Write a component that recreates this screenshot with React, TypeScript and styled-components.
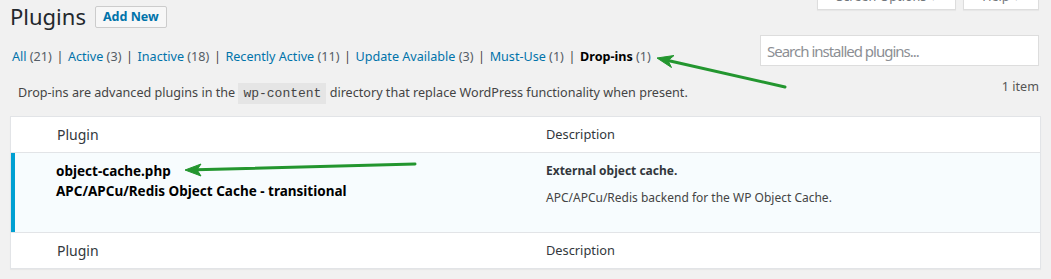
import React from 'react';
import styled, { createGlobalStyle } from 'styled-components';

const GlobalStyle = createGlobalStyle`
  body {
    margin: 0;
    background: #f1f1f1;
    font-family: "Noto Sans", sans-serif;
    font-size: 12.6px;
    color: #444;
  }
`;

const Page = styled.div`
  position: relative;
  width: 1051px;
  height: 279px;
  overflow: hidden;
  padding: 0 10px;
  box-sizing: border-box;
`;

const Header = styled.div`
  display: flex;
  align-items: flex-start;
  height: 35px;
`;

const Title = styled.h1`
  margin: 0;
  padding-top: 2px;
  font-size: 22px;
  font-weight: 400;
  line-height: 29px;
  color: #23282d;
`;

const AddButton = styled.a`
  margin: 6px 0 0 9px;
  height: 22px;
  box-sizing: border-box;
  padding: 0 7px;
  border: 1px solid #ccc;
  border-radius: 2px;
  background: #f7f7f7;
  color: #0073aa;
  font-weight: 700;
  font-size: 12.5px;
  line-height: 20px;
`;

const Meta = styled.div`
  margin: -18px 2px 0 auto;
  display: flex;
  gap: 7px;
`;

const MetaTab = styled.div<{ $w: number }>`
  width: ${p => p.$w}px;
  height: 28px;
  box-sizing: border-box;
  padding-top: 5px;
  background: #fff;
  border: 1px solid #ddd;
  border-top: none;
  box-shadow: 0 1px 1px rgba(0, 0, 0, 0.04);
  text-align: center;
  line-height: 20px;
  color: #72777c;
`;

const Toolbar = styled.div`
  display: flex;
  justify-content: space-between;
  align-items: flex-start;
  height: 31px;
`;

const Filters = styled.ul`
  list-style: none;
  margin: 12px 0 0 2px;
  padding: 0;
  display: flex;
  line-height: 20px;
  color: #666;
`;

const Filter = styled.li`
  white-space: pre;
`;

const FilterLink = styled.span<{ $current?: boolean }>`
  color: ${p => (p.$current ? '#000' : '#0073aa')};
  font-weight: ${p => (p.$current ? 700 : 400)};
`;

const Count = styled.span`
  color: #555d66;
`;

const Sep = styled.span`
  margin: 0 4.6px;
  color: #444;
`;

const Search = styled.input`
  width: 279px;
  height: 31px;
  box-sizing: border-box;
  margin-right: 2px;
  padding: 0 6px;
  border: 1px solid #ddd;
  background: #fff;
  font-family: "Noto Sans", sans-serif;
  font-size: 15px;
  letter-spacing: -1px;
  color: #32373c;
  &::placeholder {
    color: #8c8f94;
  }
`;

const InfoRow = styled.div`
  display: flex;
  justify-content: space-between;
  align-items: flex-start;
  height: 50px;
`;

const Note = styled.p`
  margin: 0;
  padding: 17px 0 0 8px;
  line-height: 20px;
`;

const Code = styled.code`
  padding: 3px 5px;
  background: #e5e5e5;
  font-family: "Liberation Mono", monospace;
  font-size: 13px;
  color: #444;
`;

const Items = styled.span`
  margin: 11px 2px 0 0;
  line-height: 20px;
  color: #555;
`;

const Table = styled.div`
  background: #fff;
  border: 1px solid #e2e4e7;
  box-shadow: 0 1px 1px rgba(0, 0, 0, 0.04);
`;

const Row = styled.div<{ $active?: boolean; $head?: boolean }>`
  display: grid;
  grid-template-columns: 525px 1fr;
  background: ${p => (p.$active ? '#f7fcfe' : '#fff')};
  border-bottom: ${p => (p.$head ? '1px solid #e2e4e7' : 'none')};
  min-height: ${p => (p.$active ? 79 : 35)}px;
`;

const HeadCell = styled.div<{ $first?: boolean }>`
  padding: 0 10px 0 ${p => (p.$first ? 46 : 10)}px;
  line-height: 35px;
  font-size: ${p => (p.$first ? 14 : 12.8)}px;
  color: #32373c;
`;

const NameCell = styled.div`
  border-left: 4px solid #00a0d2;
  padding: 8px 10px 0 41px;
  font-size: 13.5px;
  font-weight: 700;
  line-height: 20px;
  color: #000;
`;

const DescCell = styled.div`
  padding: 8px 10px 0;
  font-size: 12px;
  line-height: 20px;
  color: #444;
`;

const DescLine = styled.p<{ $strong?: boolean }>`
  margin: ${p => (p.$strong ? 0 : '7px 0 0')};
  font-weight: ${p => (p.$strong ? 700 : 400)};
  color: ${p => (p.$strong ? '#32373c' : '#444')};
`;

const Arrows = styled.svg`
  position: absolute;
  left: 0;
  top: 0;
  pointer-events: none;
`;

const filters = [
  { label: 'All', count: 21 },
  { label: 'Active', count: 3 },
  { label: 'Inactive', count: 18 },
  { label: 'Recently Active', count: 11 },
  { label: 'Update Available', count: 3 },
  { label: 'Must-Use', count: 1 },
  { label: 'Drop-ins', count: 1, current: true },
];

export default function App() {
  return (
    <Page>
      <GlobalStyle />
      <Header>
        <Title>Plugins</Title>
        <AddButton>Add New</AddButton>
        <Meta>
          <MetaTab $w={139}>Screen Options ▾</MetaTab>
          <MetaTab $w={76}>Help ▾</MetaTab>
        </Meta>
      </Header>

      <Toolbar>
        <Filters>
          {filters.map((f, i) => (
            <Filter key={f.label}>
              <FilterLink $current={f.current}>{f.label}</FilterLink>
              <Count> ({f.count})</Count>
              {i < filters.length - 1 && <Sep>|</Sep>}
            </Filter>
          ))}
        </Filters>
        <Search placeholder="Search installed plugins..." />
      </Toolbar>

      <InfoRow>
        <Note>
          Drop-ins are advanced plugins in the <Code>wp-content</Code> directory that replace WordPress
          functionality when present.
        </Note>
        <Items>1 item</Items>
      </InfoRow>

      <Table>
        <Row $head>
          <HeadCell $first>Plugin</HeadCell>
          <HeadCell>Description</HeadCell>
        </Row>
        <Row $active $head>
          <NameCell>
            object-cache.php
            <br />
            APC/APCu/Redis Object Cache - transitional
          </NameCell>
          <DescCell>
            <DescLine $strong>External object cache.</DescLine>
            <DescLine>APC/APCu/Redis backend for the WP Object Cache.</DescLine>
          </DescCell>
        </Row>
        <Row>
          <HeadCell $first>Plugin</HeadCell>
          <HeadCell>Description</HeadCell>
        </Row>
      </Table>

      <Arrows width="1051" height="279">
        <g fill="#23962f" stroke="#23962f">
          <line x1="785" y1="87" x2="668" y2="60.5" strokeWidth="3" strokeLinecap="round" />
          <polygon points="657,58 674,55.5 668,60.5 671.5,67.5" strokeWidth="1" strokeLinejoin="round" />
          <line x1="415" y1="164" x2="196" y2="169.8" strokeWidth="3" strokeLinecap="round" />
          <polygon points="185,170 201,164 197,169.8 201,176" strokeWidth="1" strokeLinejoin="round" />
        </g>
      </Arrows>
    </Page>
  );
}
